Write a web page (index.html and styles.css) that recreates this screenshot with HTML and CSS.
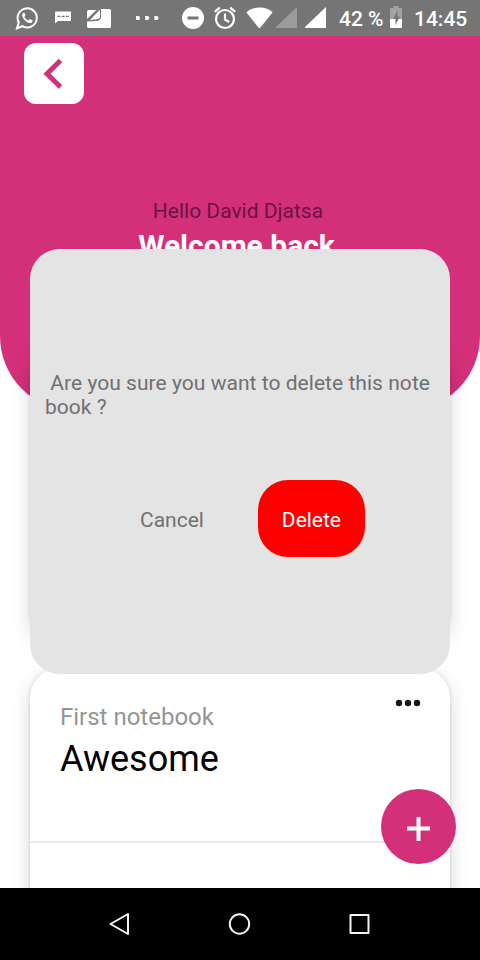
FILE: index.html
```html
<!DOCTYPE html>
<html lang="en">
<head>
<meta charset="utf-8">
<title>Notebooks</title>
<link rel="stylesheet" href="styles.css">
</head>
<body>
<div class="screen">
  <div class="status">
    <div class="status-group">
      <svg width="25" height="36" viewBox="15 0 25 36"><path d="M17 28.3l1.8-5.8a9.6 9.6 0 1 1 3.6 3.7z" fill="none" stroke="#fff" stroke-width="2"/><path d="M23.500 12.700c-1.800 1-1.600 3.200-.4 5.200 1.500 2.500 3.400 4.200 6 5 1.800.5 3.500-.5 3.600-2.500l-2.800-1.500-1.500 1.600c-1.900-.7-3.200-2-4-3.700l1.100-1.400-1-2.700z" fill="#fff"/></svg>
      <svg class="chat" width="18" height="36" viewBox="54 0 18 36"><path fill="#fff" fill-rule="evenodd" d="M56 11.500h14.200q.8 0 .8.800v8q0 .8-.8.800H58l-3 2.500V12.300q0-.8 1-.8zM57.500 15.800v1.300h3v-1.300zm4.200 0v1.300h3v-1.300zm4.200 0v1.300h3v-1.300z"/></svg>
      <svg class="news" width="26" height="36" viewBox="86 0 26 36"><path fill="#fff" d="M101 9h8.500q1.500 0 1.500 1.500v16q0 1.500-1.500 1.500h-21q-1.500 0-1.500-1.500V21.500l9.500-.5q4-.3 4.500-4z"/><path d="M88.500 10h8L87 19v-7.500q0-1.500 1.500-1.500zM90 20l10-10.500v6.500q0 3-3 3.300z" fill="#fff"/></svg>
      <svg class="more" width="24" height="36" viewBox="135 0 24 36"><path fill="#fff" d="M136 16h2.500l1.500 1v2l-1.500 1H136zm9.200 0h2.500l1.500 1v2l-1.500 1h-2.500zm9.200 0h2.500l1.500 1v2l-1.500 1h-2.500z"/></svg>
    </div>
    <div class="status-group">
      <svg width="24" height="36" viewBox="181 0 24 36"><circle cx="193" cy="18" r="11" fill="#fff"/><path d="M187.500 18h11" stroke="#757575" stroke-width="3"/></svg>
      <svg class="alarm" width="24" height="36" viewBox="213 0 24 36"><g fill="none" stroke="#fff" stroke-width="2.200"><circle cx="225" cy="19" r="9"/><path d="M225 13.500v6l4.200 2.500M214.700 11.800l5-4.200M235.300 11.800l-5-4.200"/></g></svg>
      <svg class="wifi" width="27" height="36" viewBox="245.500 0 27 36"><path fill="#fff" d="M246 12.500C251 5.800 267 5.800 272 12.500L260 27.500q-1 1-2 0z"/></svg>
      <svg class="signal" width="54" height="36" viewBox="274 0 54 36"><path fill="#9c9c9c" d="M297 7v21h-20.500q-1.500-.5 0-1.500z"/><path fill="#fff" d="M326 7v21h-20.500q-1.500-.5 0-1.500z"/></svg>
      <span class="percent">42 %</span>
      <svg class="battery" width="14" height="36" viewBox="389 0 14 36"><path fill="#a3a3a3" d="M393.500 6h5v2h3.500v12h-12V8h3.500z"/><path fill="#fff" d="M390 19h12v8q0 1-1 1h-10q-1 0-1-1z"/><path fill="#757575" d="M397.500 10.500l-4.500 8.500h2.500v6l4.500-8.500h-2.500z"/></svg>
      <span class="clock">14:45</span>
    </div>
  </div>

  <main class="app">
    <header class="hero">
      <button class="back" aria-label="Back"><svg width="60" height="61" viewBox="0 0 60 61"><path d="M36.500 17.500L23 30.800L36.500 44" fill="none" stroke="#d43079" stroke-width="5"/></svg></button>
      <p class="hello">Hello David Djatsa</p>
      <h1 class="welcome">Welcome back</h1>
    </header>
    <section class="notes">
      <article class="card"></article>
      <article class="card">
        <div class="card-head">
          <p class="card-kicker">First notebook</p>
          <svg class="dots" width="26" height="8" viewBox="0 0 26 8"><g fill="#171717"><circle cx="4" cy="4" r="3.200"/><circle cx="13" cy="4" r="3.200"/><circle cx="22" cy="4" r="3.200"/></g></svg>
        </div>
        <h2 class="card-title">Awesome</h2>
        <hr class="rule">
      </article>
    </section>
    <button class="add" aria-label="Add"><svg width="75" height="75" viewBox="0 0 75 75"><path d="M26 39.500h23M37.500 28v24" stroke="#fff" stroke-width="4"/></svg></button>
    <div class="dialog" role="dialog">
      <p class="question"> Are you sure you want to delete this note book ?</p>
      <div class="actions">
        <button class="cancel">Cancel</button>
        <button class="delete">Delete</button>
      </div>
    </div>
  </main>

  <nav class="nav">
    <svg width="24" height="24" viewBox="0 0 24 24"><path d="M20 2v20L2.500 12z"/></svg>
    <svg width="24" height="24" viewBox="0 0 24 24"><circle cx="11.500" cy="12" r="9.700"/></svg>
    <svg width="24" height="24" viewBox="0 0 24 24"><path d="M3.500 3h18v18h-18z"/></svg>
  </nav>
</div>
</body>
</html>
```
FILE: styles.css
```css
* { box-sizing: border-box; }
body, p, h1, h2 { margin: 0; }
body { font-family: Roboto, "Liberation Sans", sans-serif; }
button { border: 0; padding: 0; background: none; font: inherit; }
svg { display: block; flex: none; }

.screen {
  display: flex;
  flex-direction: column;
  width: 480px;
  height: 960px;
  overflow: hidden;
  background: #fff;
}

.status {
  display: flex;
  justify-content: space-between;
  height: 36px;
  padding: 0 12px 0 15px;
  background: #757575;
  color: #fff;
  font-size: 21px;
  font-weight: 500;
  line-height: 38px;
}
.status-group { display: flex; white-space: nowrap; }
.chat { margin-left: 14px; }
.news { margin-left: 14px; }
.more { margin-left: 23px; }
.alarm { margin-left: 8px; }
.wifi { margin-left: 8.5px; }
.signal { margin-left: 1.5px; }
.percent { width: 50px; margin-left: 11px; }
.clock { width: 54px; margin-left: 11px; }

.app {
  position: relative;
  flex: none;
  height: 852px;
  overflow: hidden;
}
.hero {
  height: 375px;
  padding-top: 7px;
  border-radius: 0 0 75px 75px;
  background: #d43079;
  text-align: center;
}
.back {
  display: block;
  width: 60px;
  height: 61px;
  margin-left: 24px;
  border-radius: 12px;
  background: #fff;
}
.hello {
  margin-top: 94px;
  padding-right: 4px;
  color: #6b1246;
  font-size: 21px;
  line-height: 26px;
}
.welcome {
  padding-right: 7px;
  color: #fff;
  font-size: 30px;
  font-weight: 700;
  line-height: 44px;
}

.notes {
  display: flex;
  flex-direction: column;
  gap: 24px;
  margin-top: -70px;
  padding: 0 30px;
}
.card {
  flex: none;
  height: 303px;
  border-radius: 30px;
  background: #fff;
  box-shadow: 0 6px 20px rgba(0, 0, 0, 0.14), 0 0 4px rgba(0, 0, 0, 0.12);
}
.card-head {
  display: flex;
  justify-content: space-between;
  padding: 35px 29px 0 30px;
}
.card-kicker {
  color: #959595;
  font-size: 24px;
  line-height: 28px;
}
.dots { margin-top: -4px; }
.card-title {
  padding-left: 30px;
  color: #000;
  font-size: 36px;
  font-weight: 400;
  line-height: 56px;
}
.rule {
  height: 2px;
  margin: 54px 0 0;
  border: 0;
  background: #e9e9e9;
}

.add {
  position: absolute;
  right: 24px;
  bottom: 24px;
  width: 75px;
  height: 75px;
  border-radius: 50%;
  background: #d43079;
}
.dialog {
  position: absolute;
  top: 213px;
  left: 30px;
  width: 420px;
  height: 425px;
  padding: 122px 15px 0;
  border-radius: 30px;
  background: #e4e4e4;
  color: #707070;
  font-size: 21px;
}
.question {
  line-height: 24px;
  letter-spacing: 0.04px;
  white-space: pre-wrap;
}
.actions {
  display: flex;
  align-items: center;
  gap: 54px;
  margin-top: 61px;
  padding-left: 95px;
}
.cancel {
  padding-top: 2px;
  color: #707070;
}
.delete {
  width: 107px;
  height: 77px;
  padding-top: 2px;
  border-radius: 30px;
  background: #f00;
  color: #fff;
}

.nav {
  display: flex;
  justify-content: space-between;
  align-items: center;
  flex: none;
  height: 72px;
  padding: 0 109px 0 108px;
  background: #000;
}
.nav svg {
  fill: none;
  stroke: #f4f4f4;
  stroke-width: 2;
  stroke-linejoin: round;
}
```
